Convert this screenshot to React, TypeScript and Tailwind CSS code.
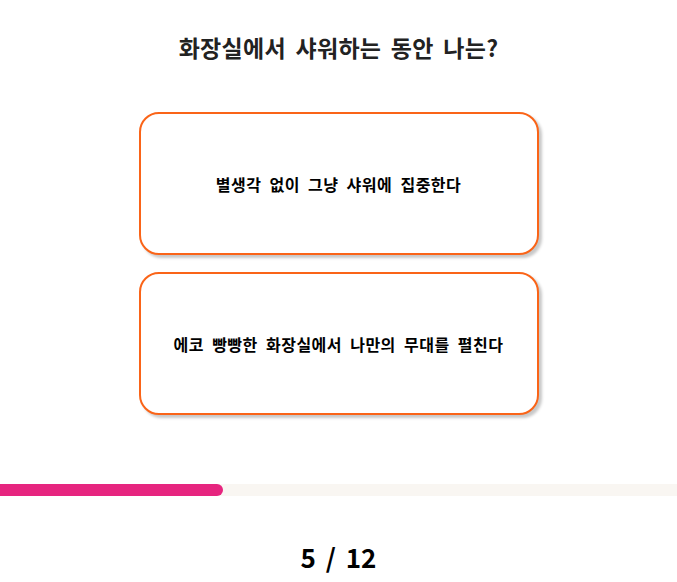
export default function App() {
  const current = 5;
  const total = 12;
  const options = [
    "별생각 없이 그냥 샤워에 집중한다",
    "에코 빵빵한 화장실에서 나만의 무대를 펼친다",
  ];

  return (
    <div
      className="flex min-h-[582px] w-full flex-col items-center bg-white pt-[32px]"
      style={{ fontFamily: '"Noto Sans CJK KR", "Noto Sans", sans-serif' }}
    >
      <h1 className="text-[23px] font-bold leading-[30px] tracking-[0.3px] text-[#222] [word-spacing:4px]">
        화장실에서 샤워하는 동안 나는?
      </h1>

      <div className="mt-[50px] flex flex-col gap-[17px]">
        {options.map((text) => (
          <button
            key={text}
            className="flex h-[143px] w-[400px] items-center justify-center rounded-[20px] border-2 border-[#fa6418] bg-white text-[16px] font-bold tracking-[0.5px] text-black shadow-[3px_3px_3px_rgba(0,0,0,0.22)] [word-spacing:4px]"
          >
            {text}
          </button>
        ))}
      </div>

      <div className="mt-[69px] h-[12px] w-full bg-[#f9f6f2]">
        <div className="h-full w-[33%] rounded-r-full bg-[#e6257f]" />
      </div>

      <div className="mt-[43px] text-[26px] font-bold leading-[36px] text-black [word-spacing:4px]">
        {current} / {total}
      </div>
    </div>
  );
}
